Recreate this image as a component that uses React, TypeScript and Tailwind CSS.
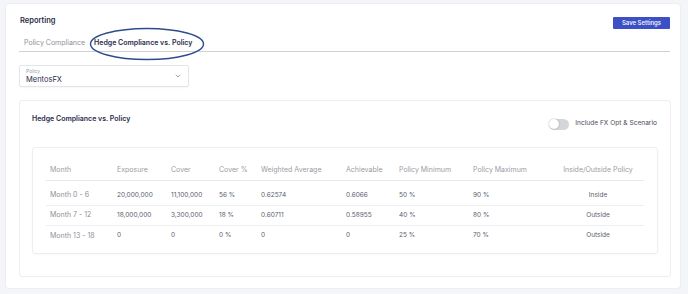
import { ChevronDown } from "lucide-react";

const cols = "grid-cols-[67px_54px_48px_42px_85px_53px_74px_79px_96px]";

const headers = [
  "Month",
  "Exposure",
  "Cover",
  "Cover %",
  "Weighted Average",
  "Achievable",
  "Policy Minimum",
  "Policy Maximum",
  "Inside/Outside Policy",
];

const rows = [
  ["Month 0 - 6", "20,000,000", "11,100,000", "56 %", "0.62574", "0.6066", "50 %", "90 %", "Inside"],
  ["Month 7 - 12", "18,000,000", "3,300,000", "18 %", "0.60711", "0.58955", "40 %", "80 %", "Outside"],
  ["Month 13 - 18", "0", "0", "0 %", "0", "0", "25 %", "70 %", "Outside"],
];

export default function App() {
  return (
    <div
      className="h-[294px] w-[688px] bg-[#f4f5f9] pl-[5px] pt-[3px] antialiased"
      style={{ fontFamily: "Inter, 'Noto Sans', sans-serif" }}
    >
      <div className="relative h-[286px] w-[676px] rounded-sm border border-[#eceef3] bg-white pl-[13px] pr-[10px] pt-[10px]">
        {/* header */}
        <div className="flex h-[13px] items-center justify-between">
          <span className="pl-px text-[7.5px] font-semibold text-[#2a2c4a]">Reporting</span>
          <button className="mt-[4px] flex h-[12px] w-[57px] items-center justify-center rounded-[1px] bg-[#3c4fc4] text-[6px] font-medium text-white">
            Save Settings
          </button>
        </div>

        {/* tabs */}
        <div className="mt-[9px] flex h-[16px] items-center border-b border-[#cfd0d4] pl-[5px]">
          <span className="text-[7px] text-[#8d8f99]">Policy Compliance</span>
          <span className="ml-[9px] text-[7px] font-semibold text-[#2a2c4a]">
            Hedge Compliance vs. Policy
          </span>
        </div>

        {/* policy select */}
        <div className="mt-[13px] flex h-[22px] w-[170px] items-center justify-between rounded-[2px] border border-[#e3e5ea] pl-[6px] pr-[6px] shadow-[0_1px_2px_rgba(0,0,0,0.04)]">
          <div className="flex flex-col leading-none">
            <span className="text-[5px] text-[#9a9ca6]">Policy</span>
            <span className="mt-[2px] text-[7.5px] text-[#2a2c4a]">MentosFX</span>
          </div>
          <ChevronDown className="h-[8px] w-[8px] text-[#777]" strokeWidth={2} />
        </div>

        {/* compliance card */}
        <div className="mt-[13px] h-[177px] w-[652px] rounded-[3px] border border-[#eceef2] pl-[12px] pr-[13px] pt-[11px]">
          <div className="flex h-[14px] items-center justify-between">
            <span className="text-[7px] font-semibold text-[#2a2c4a]">Hedge Compliance vs. Policy</span>
            <div className="mt-[10px] flex items-center gap-[6px]">
              <div className="flex h-[11px] w-[20px] items-center rounded-full bg-[#d6d6d9]">
                <div className="h-[10px] w-[10px] rounded-full bg-white shadow-[0_0_2px_rgba(0,0,0,0.3)]" />
              </div>
              <span className="text-[6.6px] text-[#4a4c5c]">Include FX Opt &amp; Scenario</span>
            </div>
          </div>

          <div className="mt-[21px] h-[107px] w-[626px] rounded-[3px] border border-[#eceef2] pl-[13px] pt-[13px] shadow-[0_1px_2px_rgba(0,0,0,0.03)]">
            <div className={`grid h-[20px] w-[598px] items-center border-b border-[#e8e9ee] ${cols}`}>
              {headers.map((h, i) => (
                <span
                  key={h}
                  className={`pl-[4px] text-[7px] text-[#9a9ca4] ${i === 8 ? "text-center" : ""}`}
                >
                  {h}
                </span>
              ))}
            </div>
            {rows.map((r, ri) => (
              <div
                key={r[0]}
                className={`grid w-[598px] items-center ${cols} ${
                  ri === 0 ? "h-[25px] pt-[5px]" : "h-[20px]"
                } ${ri < 2 ? "border-b border-[#eceef2]" : ""}`}
              >
                {r.map((c, i) => (
                  <span
                    key={i}
                    className={`pl-[4px] ${
                      i === 0 ? "text-[7px] text-[#8e9098]" : "text-[6.5px] text-[#5a5c6e]"
                    } ${i === 8 ? "text-center" : ""}`}
                  >
                    {c}
                  </span>
                ))}
              </div>
            ))}
          </div>
        </div>

        {/* hand-drawn highlight around the active tab */}
        <svg
          className="pointer-events-none absolute left-[83px] top-[23px]"
          width="116"
          height="34"
          viewBox="0 0 116 34"
        >
          <ellipse cx="58" cy="17" rx="56.5" ry="15.5" fill="none" stroke="#2d4c8e" strokeWidth="1.4" />
        </svg>
      </div>
    </div>
  );
}
